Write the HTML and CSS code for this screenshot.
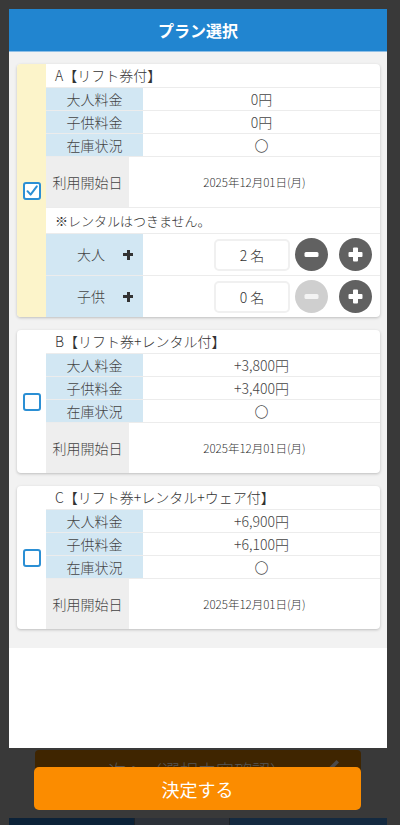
FILE: index.html
```html
<!DOCTYPE html>
<html lang="ja">
<head>
  <meta charset="UTF-8" />
  <meta name="viewport" content="width=device-width, initial-scale=1.0"/>
  <title>プラン選択</title>
  <link rel="stylesheet" href="styles.css">
</head>
<body>
<div class="modal">
  <div class="modal-head">プラン選択</div>
  <div class="modal-body">

    <div class="plan-card selected">
      <div class="plan-check">
        <span class="checkbox">
          <svg width="14" height="14" viewBox="0 0 14 14"><path d="M2.5 7.2 L5.6 10.6 L11.8 2.4" fill="none" stroke="#2b8fd4" stroke-width="2" stroke-linecap="round" stroke-linejoin="round"/></svg>
        </span>
      </div>
      <div class="plan-info">
        <div class="plan-title">A【リフト券付】</div>
        <div class="row"><div class="label">大人料金</div><div class="value">0円</div></div>
        <div class="row"><div class="label">子供料金</div><div class="value">0円</div></div>
        <div class="row"><div class="label">在庫状況</div><div class="value">〇</div></div>
        <div class="row date"><div class="label">利用開始日</div><div class="value">2025年12月01日(月)</div></div>
        <div class="note">※レンタルはつきません。</div>
        <div class="row qty">
          <div class="label">大人<span class="mini-plus"></span></div>
          <div class="controls">
            <div class="count">2 名</div>
            <span class="round-btn">
              <svg width="33" height="33" viewBox="0 0 33 33"><circle cx="16.5" cy="16.5" r="16.5" fill="#616161"/><rect x="9.5" y="14" width="14" height="5" rx="1.5" fill="#fff"/></svg>
            </span>
            <span class="round-btn">
              <svg width="33" height="33" viewBox="0 0 33 33"><circle cx="16.5" cy="16.5" r="16.5" fill="#616161"/><rect x="9.5" y="14" width="14" height="5" rx="1" fill="#fff"/><rect x="14" y="9.5" width="5" height="14" rx="1" fill="#fff"/></svg>
            </span>
          </div>
        </div>
        <div class="row qty">
          <div class="label">子供<span class="mini-plus"></span></div>
          <div class="controls">
            <div class="count">0 名</div>
            <span class="round-btn">
              <svg width="33" height="33" viewBox="0 0 33 33"><circle cx="16.5" cy="16.5" r="16.5" fill="#cfcfcf"/><rect x="9.5" y="14" width="14" height="5" rx="1.5" fill="#fff" fill-opacity="0.75"/></svg>
            </span>
            <span class="round-btn">
              <svg width="33" height="33" viewBox="0 0 33 33"><circle cx="16.5" cy="16.5" r="16.5" fill="#616161"/><rect x="9.5" y="14" width="14" height="5" rx="1" fill="#fff"/><rect x="14" y="9.5" width="5" height="14" rx="1" fill="#fff"/></svg>
            </span>
          </div>
        </div>
      </div>
    </div>

    <div class="plan-card">
      <div class="plan-check"><span class="checkbox"></span></div>
      <div class="plan-info">
        <div class="plan-title">B【リフト券+レンタル付】</div>
        <div class="row"><div class="label">大人料金</div><div class="value">+3,800円</div></div>
        <div class="row"><div class="label">子供料金</div><div class="value">+3,400円</div></div>
        <div class="row"><div class="label">在庫状況</div><div class="value">〇</div></div>
        <div class="row date"><div class="label">利用開始日</div><div class="value">2025年12月01日(月)</div></div>
      </div>
    </div>

    <div class="plan-card">
      <div class="plan-check"><span class="checkbox"></span></div>
      <div class="plan-info">
        <div class="plan-title">C【リフト券+レンタル+ウェア付】</div>
        <div class="row"><div class="label">大人料金</div><div class="value">+6,900円</div></div>
        <div class="row"><div class="label">子供料金</div><div class="value">+6,100円</div></div>
        <div class="row"><div class="label">在庫状況</div><div class="value">〇</div></div>
        <div class="row date"><div class="label">利用開始日</div><div class="value">2025年12月01日(月)</div></div>
      </div>
    </div>

  </div>
  <div class="modal-rest"></div>
</div>

<div class="footer">
  <div class="next-btn">
    次へ（選択内容確認）
    <svg class="pencil" width="14" height="14" viewBox="0 0 14 14"><path d="M2 12 L3 8.5 L9.5 2 L12 4.5 L5.5 11 Z" fill="#4a4a4a"/></svg>
  </div>
  <div class="tabbar">
    <span class="tab t1"></span><span class="tab t2"></span><span class="tab t3"></span>
  </div>
  <button class="decide-btn">決定する</button>
</div>
</body>
</html>
```

FILE: styles.css
```css
body {
  margin: 0;
  font-family: "Noto Sans CJK JP", "Noto Sans", sans-serif;
  font-weight: 300;
  background-color: #393939;
  color: #333;
  height: 825px;
  overflow: hidden;
}
.modal {
  margin: 9px 0 0 9px;
  width: 378px;
  height: 739px;
  background: #fff;
  display: flex;
  flex-direction: column;
}
.modal-head {
  height: 42px;
  background: #2185d0;
  border-bottom: 1px solid #8fbfe6;
  color: #fff;
  font-size: 16px;
  font-weight: bold;
  display: flex;
  align-items: center;
  justify-content: center;
}
.modal-body {
  background: #f2f2f2;
  padding: 12px 7px 19px 8px;
  display: flex;
  flex-direction: column;
  gap: 13px;
}
.modal-rest {
  flex-grow: 1;
  background: #fff;
}
.plan-card {
  display: flex;
  background: #fff;
  border-radius: 4px;
  box-shadow: 0 1px 3px rgba(0,0,0,0.22);
  overflow: hidden;
}
.plan-check {
  width: 29px;
  flex-shrink: 0;
  display: flex;
  align-items: center;
  justify-content: center;
}
.plan-card.selected .plan-check {
  background: #fcf4ca;
}
.checkbox {
  width: 14px;
  height: 14px;
  border: 2px solid #2b8fd4;
  border-radius: 3px;
  background: #fff;
  display: flex;
  align-items: center;
  justify-content: center;
}
.plan-info {
  flex-grow: 1;
}
.plan-title {
  height: 23px;
  line-height: 23px;
  padding-left: 9px;
  font-size: 14px;
  border-bottom: 1px solid #ececec;
}
.row {
  display: grid;
  grid-template-columns: 97px 1fr;
  height: 22px;
  border-bottom: 1px solid #ececec;
  font-size: 14px;
}
.row .label {
  background: #d2e7f3;
  color: #444;
  text-align: center;
  line-height: 22px;
}
.row .value {
  text-align: center;
  line-height: 22px;
  color: #444;
}
.row.date {
  grid-template-columns: 83px 1fr;
  height: 50px;
}
.row.date .label {
  background: #eeeeee;
  line-height: 50px;
}
.row.date .value {
  line-height: 50px;
  font-size: 11.5px;
  color: #333;
}
.plan-card .row.date:last-child {
  border-bottom: none;
}
.note {
  height: 25px;
  line-height: 25px;
  padding-left: 9px;
  font-size: 13px;
  border-bottom: 1px solid #ececec;
}
.row.qty {
  height: 41px;
}
.row.qty:last-child {
  border-bottom: none;
}
.row.qty .label {
  display: flex;
  align-items: center;
  justify-content: flex-end;
  gap: 18px;
  padding-right: 10px;
  line-height: 41px;
}
.mini-plus {
  position: relative;
  width: 10px;
  height: 10px;
}
.mini-plus::before,
.mini-plus::after {
  content: "";
  position: absolute;
  background: #333;
}
.mini-plus::before {
  left: 0;
  top: 3.5px;
  width: 10px;
  height: 3px;
}
.mini-plus::after {
  left: 3.5px;
  top: 0;
  width: 3px;
  height: 10px;
}
.controls {
  display: flex;
  align-items: center;
  justify-content: flex-end;
  padding-right: 8px;
}
.count {
  width: 72px;
  height: 28px;
  border: 2px solid #f0f0f0;
  border-radius: 5px;
  text-align: center;
  line-height: 28px;
  font-size: 14px;
  color: #333;
  margin-right: 5px;
}
.round-btn {
  width: 33px;
  height: 33px;
  display: block;
}
.round-btn + .round-btn {
  margin-left: 11px;
}
.footer {
  position: relative;
  height: 77px;
  display: flex;
  flex-direction: column;
  justify-content: space-between;
}
.next-btn {
  margin: 2px 0 0 35px;
  width: 326px;
  height: 42px;
  background: #3f2500;
  border-radius: 4px;
  color: #555;
  font-size: 18px;
  line-height: 40px;
  text-align: center;
  position: relative;
}
.pencil {
  position: absolute;
  right: 20px;
  top: 8px;
}
.tabbar {
  display: flex;
  margin-left: 9px;
  width: 378px;
  height: 7px;
}
.tab.t1 { width: 125px; background: #0c2238; }
.tab.t2 { width: 94px; background: #2c3139; border-left: 1px solid #1c2228; }
.tab.t3 { flex-grow: 1; background: #142a40; border-left: 1px solid #1c2228; }
.decide-btn {
  position: absolute;
  left: 34px;
  top: 19px;
  width: 327px;
  height: 43px;
  border: none;
  border-radius: 5px;
  background: #fb8c00;
  color: #fff;
  font-family: "Noto Sans CJK JP", sans-serif;
  font-weight: 400;
  font-size: 18px;
}
```
